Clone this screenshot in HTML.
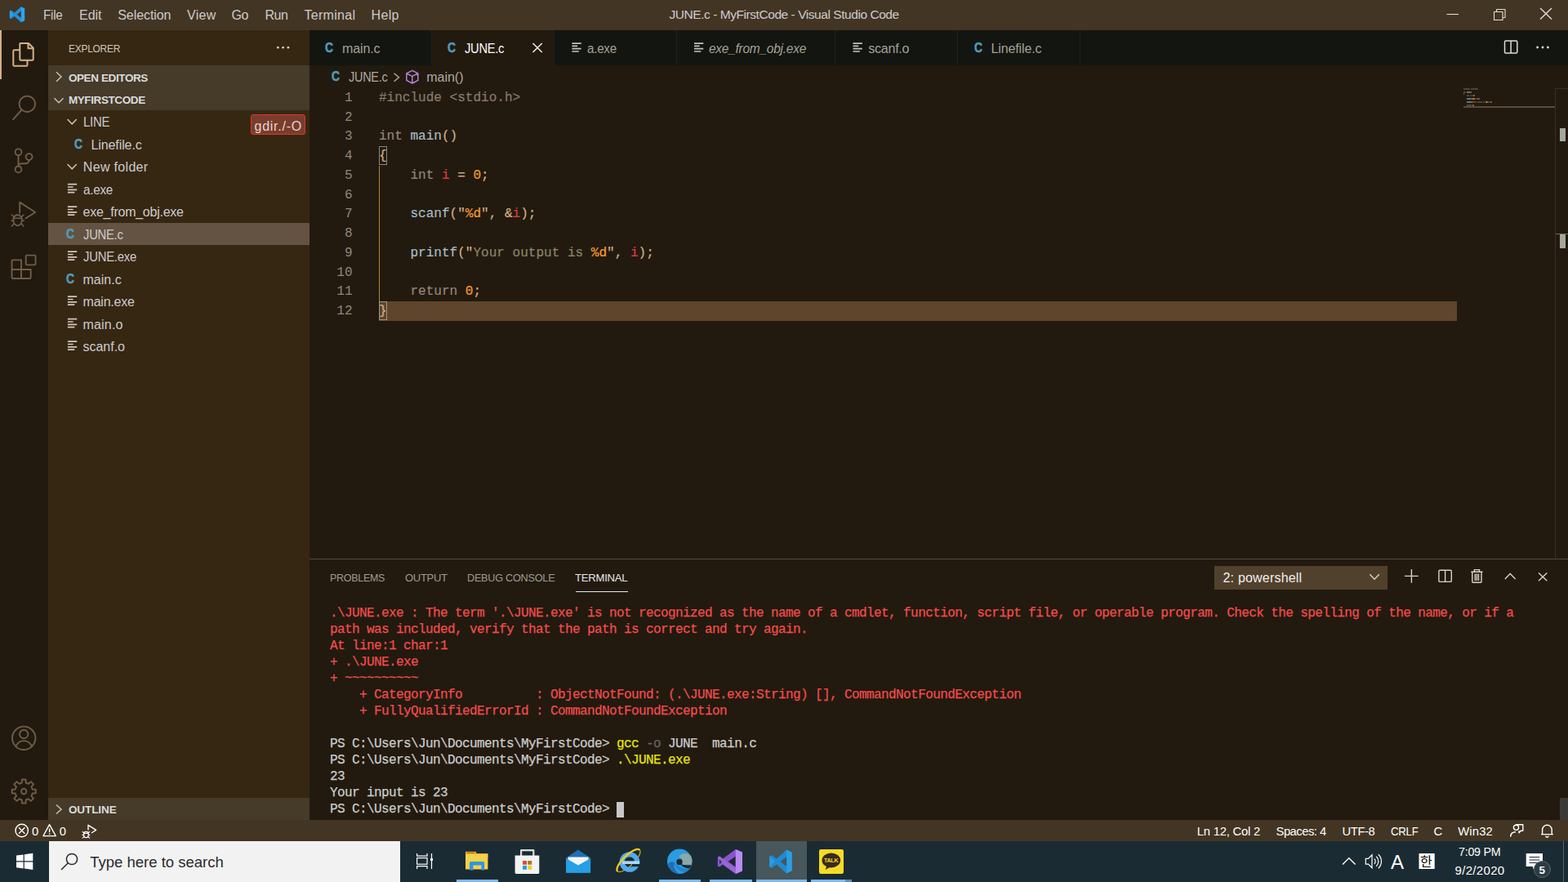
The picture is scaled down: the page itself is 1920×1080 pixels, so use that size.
<!DOCTYPE html>
<html lang="en"><head><meta charset="utf-8">
<title>JUNE.c - MyFirstCode - Visual Studio Code</title>
<style>
html,body{margin:0;padding:0;width:1920px;height:1080px;overflow:hidden;background:#221a0f}
body{position:relative;font-family:"Liberation Sans",sans-serif;color:#cccccc}
.a{position:absolute}
.t{position:absolute;white-space:pre;line-height:1;font-family:"Liberation Sans",sans-serif}
.m{font-family:"Liberation Mono",monospace}
.k{font-family:"Liberation Sans","Noto Sans CJK KR",sans-serif}
svg{position:absolute;overflow:visible}
/* regions */
#titlebar{left:0;top:0;width:1920px;height:37px;background:#423523}
#activity{left:0;top:37px;width:59px;height:967px;background:#221a0f}
#sidebar{left:59px;top:37px;width:320px;height:967px;background:#362712}
#tabs{left:379px;top:37px;width:1541px;height:43px;background:#131510}
#editor{left:379px;top:80px;width:1541px;height:605px;background:#221a0f}
#panel{left:379px;top:685px;width:1541px;height:319px;background:#221a0f}
#statusbar{left:0;top:1003.5px;width:1920px;height:26.5px;background:#423523}
#taskbar{left:0;top:1030px;width:1920px;height:50px;background:#1b2b33}
.sec{position:absolute;left:0;width:320px;background:#463a29}
.row{position:absolute;left:0;width:320px;height:27px}
/* code */
.cl{position:absolute;left:464px;white-space:pre;font-family:"Liberation Mono",monospace;font-size:16.042px;line-height:23.75px;height:23.75px;color:#d3af86;-webkit-text-stroke:0.2px}
.ln{position:absolute;left:379px;width:52.6px;text-align:right;white-space:pre;font-family:"Liberation Mono",monospace;font-size:16.042px;line-height:23.75px;height:23.75px;color:#8e887e}
.kw{color:#94867a}.pp{color:#8a7b6b}.fn{color:#a9bcc2}.vr{color:#de3a42}.nu{color:#f79a32}.st{color:#8c8468}.pl{color:#d3af86}
/* terminal */
.tl{position:absolute;left:404px;white-space:pre;font-family:"Liberation Mono",monospace;font-size:16px;letter-spacing:-0.6px;line-height:20px;height:20px;color:#cccccc;-webkit-text-stroke:0.25px}
.r{color:#f14c4c}.y{color:#e5e510}.g{color:#666666}

</style></head>
<body>
<!-- ===== main regions ===== -->
<div class="a" id="titlebar"></div>
<div class="a" id="activity"><div class="a" style="left:0;top:0;width:2px;height:60px;background:#d3af86"></div></div>
<div class="a" id="sidebar">
  <div class="sec" style="top:43px;height:55px"></div>
  <div class="row" style="top:236.3px;height:26.6px;background:#645342"></div>
  <div class="sec" style="top:940px;height:27px"></div>
  <div class="a" style="left:248px;top:103.3px;width:67px;height:25px;background:#7a3c2c;border:1px solid #d8372f;border-radius:3px;box-sizing:border-box"></div>
</div>
<div class="a" id="tabs">
  <div class="a" style="left:149.5px;top:0;width:150px;height:43px;background:#221a0f"></div>
  <div class="a" style="left:149px;top:0;width:1px;height:43px;background:#1d211b"></div>
  <div class="a" style="left:299px;top:0;width:1px;height:43px;background:#1d211b"></div>
  <div class="a" style="left:449px;top:0;width:1px;height:43px;background:#1d211b"></div>
  <div class="a" style="left:643px;top:0;width:1px;height:43px;background:#1d211b"></div>
  <div class="a" style="left:793px;top:0;width:1px;height:43px;background:#1d211b"></div>
  <div class="a" style="left:943px;top:0;width:1px;height:43px;background:#1d211b"></div>
</div>
<div class="a" id="editor">
  <!-- current line highlight -->
  <div class="a" style="left:85px;top:288.75px;width:1320px;height:23.75px;background:#5e452b"></div>
  <!-- indent guide -->
  <div class="a" style="left:85px;top:122.5px;width:1px;height:166.5px;background:#b08538"></div>
  <!-- bracket match boxes -->
  <div class="a" style="left:85px;top:99.2px;width:9.5px;height:23.3px;border:1px solid #8a8578;box-sizing:border-box"></div>
  <div class="a" style="left:85px;top:288.9px;width:9.5px;height:23.3px;border:1px solid #9a948a;box-sizing:border-box"></div>
  <!-- minimap code -->
  <div class="a" style="left:1413px;top:28.1px;width:8px;height:1.6px;background:#8a7b6b;opacity:0.42"></div>
  <div class="a" style="left:1422px;top:28.1px;width:9px;height:1.6px;background:#8a7b6b;opacity:0.42"></div>
  <div class="a" style="left:1413px;top:32.1px;width:3px;height:1.6px;background:#94867a;opacity:0.42"></div>
  <div class="a" style="left:1417px;top:32.1px;width:4px;height:1.6px;background:#8ab1c8;opacity:0.6"></div>
  <div class="a" style="left:1421px;top:32.1px;width:2px;height:1.6px;background:#d3af86;opacity:0.42"></div>
  <div class="a" style="left:1413px;top:34.1px;width:1px;height:1.6px;background:#d3af86;opacity:0.42"></div>
  <div class="a" style="left:1417px;top:36.1px;width:3px;height:1.6px;background:#94867a;opacity:0.42"></div>
  <div class="a" style="left:1421px;top:36.1px;width:1px;height:1.6px;background:#de3a42;opacity:0.7"></div>
  <div class="a" style="left:1423px;top:36.1px;width:1px;height:1.6px;background:#d3af86;opacity:0.42"></div>
  <div class="a" style="left:1425px;top:36.1px;width:1px;height:1.6px;background:#f79a32;opacity:0.7"></div>
  <div class="a" style="left:1426px;top:36.1px;width:1px;height:1.6px;background:#d3af86;opacity:0.42"></div>
  <div class="a" style="left:1417px;top:40.1px;width:5px;height:1.6px;background:#8ab1c8;opacity:0.6"></div>
  <div class="a" style="left:1422px;top:40.1px;width:2px;height:1.6px;background:#d3af86;opacity:0.42"></div>
  <div class="a" style="left:1424px;top:40.1px;width:2px;height:1.6px;background:#f79a32;opacity:0.7"></div>
  <div class="a" style="left:1426px;top:40.1px;width:2px;height:1.6px;background:#d3af86;opacity:0.42"></div>
  <div class="a" style="left:1429px;top:40.1px;width:1px;height:1.6px;background:#d3af86;opacity:0.42"></div>
  <div class="a" style="left:1430px;top:40.1px;width:1px;height:1.6px;background:#de3a42;opacity:0.7"></div>
  <div class="a" style="left:1431px;top:40.1px;width:2px;height:1.6px;background:#d3af86;opacity:0.42"></div>
  <div class="a" style="left:1417px;top:44.1px;width:6px;height:1.6px;background:#8ab1c8;opacity:0.6"></div>
  <div class="a" style="left:1423px;top:44.1px;width:2px;height:1.6px;background:#d3af86;opacity:0.42"></div>
  <div class="a" style="left:1425px;top:44.1px;width:4px;height:1.6px;background:#8c8468;opacity:0.42"></div>
  <div class="a" style="left:1430px;top:44.1px;width:6px;height:1.6px;background:#8c8468;opacity:0.42"></div>
  <div class="a" style="left:1437px;top:44.1px;width:2px;height:1.6px;background:#8c8468;opacity:0.42"></div>
  <div class="a" style="left:1440px;top:44.1px;width:2px;height:1.6px;background:#f79a32;opacity:0.7"></div>
  <div class="a" style="left:1442px;top:44.1px;width:2px;height:1.6px;background:#d3af86;opacity:0.42"></div>
  <div class="a" style="left:1445px;top:44.1px;width:1px;height:1.6px;background:#de3a42;opacity:0.7"></div>
  <div class="a" style="left:1446px;top:44.1px;width:2px;height:1.6px;background:#d3af86;opacity:0.42"></div>
  <div class="a" style="left:1417px;top:48.1px;width:6px;height:1.6px;background:#94867a;opacity:0.42"></div>
  <div class="a" style="left:1424px;top:48.1px;width:1px;height:1.6px;background:#f79a32;opacity:0.7"></div>
  <div class="a" style="left:1425px;top:48.1px;width:1px;height:1.6px;background:#d3af86;opacity:0.42"></div>
  <div class="a" style="left:1413px;top:50.1px;width:1px;height:1.6px;background:#d3af86;opacity:0.7"></div>
  <!-- minimap highlight + overview ruler -->
  <div class="a" style="left:1413px;top:50.3px;width:112px;height:1.6px;background:#5a4a38"></div>
  <div class="a" style="left:1525px;top:28px;width:1px;height:577px;background:#3a3126"></div>
  <div class="a" style="left:1525px;top:28px;width:16px;height:1px;background:#3a3126"></div>
  <div class="a" style="left:1531px;top:77px;width:7px;height:16px;background:#a3a89e"></div>
  <div class="a" style="left:1526px;top:206px;width:15px;height:1px;background:#7a6a50"></div>
  <div class="a" style="left:1531px;top:207px;width:7px;height:17px;background:#a3a89e"></div>
</div>
<div class="a" id="panel">
  <div class="a" style="left:0;top:-1px;width:1541px;height:1px;background:#574835"></div>
  <div class="a" style="left:325.5px;top:39px;width:64.5px;height:1px;background:#e7e7e7"></div>
  <div class="a" style="left:1108px;top:7.5px;width:212px;height:29.3px;background:#51412c"></div>
  <div class="a" style="left:376px;top:296.7px;width:9px;height:19px;background:#c8c8c8"></div>
  <div class="a" style="left:1530.8px;top:291.5px;width:10.2px;height:27px;background:#3b3a36"></div>
</div>
<div class="a" id="statusbar"></div>
<div class="a" id="taskbar">
  <div class="a" style="left:60px;top:0;width:430px;height:50px;background:#f2f2f2"></div>
  <div class="a" style="left:926px;top:0;width:61.5px;height:50px;background:#47575b"></div>
  <div class="a" style="left:559px;top:47px;width:51px;height:3px;background:#7db9e8"></div>
  <div class="a" style="left:806.7px;top:47px;width:51.6px;height:3px;background:#7db9e8"></div>
  <div class="a" style="left:869px;top:47px;width:51.6px;height:3px;background:#7db9e8"></div>
  <div class="a" style="left:926px;top:47px;width:61.5px;height:3px;background:#7db9e8"></div>
  <div class="a" style="left:993.3px;top:47px;width:42px;height:3px;background:#7db9e8"></div>
  <div class="a" style="left:1035.3px;top:47px;width:8px;height:3px;background:#5a8db5"></div>
  <div class="a" style="left:1913.7px;top:0;width:1px;height:50px;background:#56646b"></div>
</div>
<!-- ===== editor code ===== -->
<div class="ln" style="top:108.90px">1</div>
<div class="cl" style="top:108.90px"><span class="pp">#include &lt;stdio.h&gt;</span></div>
<div class="ln" style="top:132.65px">2</div>
<div class="ln" style="top:156.40px">3</div>
<div class="cl" style="top:156.40px"><span class="kw">int</span> <span class="fn">main</span>()</div>
<div class="ln" style="top:180.15px">4</div>
<div class="cl" style="top:180.15px">{</div>
<div class="ln" style="top:203.90px">5</div>
<div class="cl" style="top:203.90px">    <span class="kw">int</span> <span class="vr">i</span> = <span class="nu">0</span>;</div>
<div class="ln" style="top:227.65px">6</div>
<div class="ln" style="top:251.40px">7</div>
<div class="cl" style="top:251.40px">    <span class="fn">scanf</span>(<span class="pl">"</span><span class="nu">%d</span><span class="pl">"</span>, &amp;<span class="vr">i</span>);</div>
<div class="ln" style="top:275.15px">8</div>
<div class="ln" style="top:298.90px">9</div>
<div class="cl" style="top:298.90px">    <span class="fn">printf</span>(<span class="pl">"</span><span class="st">Your output is </span><span class="nu">%d</span><span class="pl">"</span>, <span class="vr">i</span>);</div>
<div class="ln" style="top:322.65px">10</div>
<div class="ln" style="top:346.40px">11</div>
<div class="cl" style="top:346.40px">    <span class="kw">return</span> <span class="nu">0</span>;</div>
<div class="ln" style="top:370.15px">12</div>
<div class="cl" style="top:370.15px">}</div>
<!-- ===== terminal ===== -->
<div class="tl r" style="top:741.0px">.\JUNE.exe : The term '.\JUNE.exe' is not recognized as the name of a cmdlet, function, script file, or operable program. Check the spelling of the name, or if a</div>
<div class="tl r" style="top:761.0px">path was included, verify that the path is correct and try again.</div>
<div class="tl r" style="top:781.0px">At line:1 char:1</div>
<div class="tl r" style="top:801.0px">+ .\JUNE.exe</div>
<div class="tl r" style="top:821.0px">+ ~~~~~~~~~~</div>
<div class="tl r" style="top:841.0px">    + CategoryInfo          : ObjectNotFound: (.\JUNE.exe:String) [], CommandNotFoundException</div>
<div class="tl r" style="top:861.0px">    + FullyQualifiedErrorId : CommandNotFoundException</div>
<div class="tl " style="top:901.0px">PS C:\Users\Jun\Documents\MyFirstCode&gt; <span class="y">gcc</span> <span class="g">-o</span> JUNE  main.c</div>
<div class="tl " style="top:921.0px">PS C:\Users\Jun\Documents\MyFirstCode&gt; <span class="y">.\JUNE.exe</span></div>
<div class="tl " style="top:941.0px">23</div>
<div class="tl " style="top:961.0px">Your input is 23</div>
<div class="tl " style="top:981.0px">PS C:\Users\Jun\Documents\MyFirstCode&gt; </div>
<!-- ===== icons (single overlay svg, page coordinates) ===== -->
<svg width="1920" height="1080" viewBox="0 0 1920 1080" style="left:0;top:0" fill="none" stroke-linecap="round" stroke-linejoin="round">
<g transform="translate(11.00 7.75) scale(0.2000)" stroke="none">
<path fill="#2aa5ee" d="M74 2 L96 12.6 V87.4 L74 98 L33 60.6 L12.6 76 L4 71.6 V28.4 L12.6 24 L33 39.4 Z M74 29 L48 50 L74 71 Z" fill-rule="evenodd"/>
<path fill="#1a7fc4" d="M74 2 L33 39.4 L12.6 24 L4 28.4 L26 50 L4 71.6 L12.6 76 L33 60.6 L74 98 V71 L48 50 L74 29 Z" opacity="0.55"/>
</g>
<g stroke="#e0dcd4" stroke-width="1.1" stroke-linecap="butt">
<path d="M1771.5 17.5 H1786"/>
<path d="M1829.5 14.5 H1840 V24.5 H1829.5 Z M1832.5 14.5 V11.5 H1843 V21.5 H1840"/>
<path d="M1886 10 L1900 23.5 M1900 10 L1886 23.5" stroke-width="1.4"/>
</g>
<g stroke="#d3af86" stroke-width="2">
<path d="M24.5 53 H35 L40.7 58.7 V72.5 Q40.7 73.7 39.5 73.7 H25.5 Q24.3 73.7 24.3 72.5 V54.2 Q24.3 53 25.5 53 Z M34.5 53.5 V59.2 H40.2"/>
<path d="M24 61.3 H17.5 Q16.3 61.3 16.3 62.5 V79.6 Q16.3 80.8 17.5 80.8 H32.3 Q33.5 80.8 33.5 79.6 V74"/>
</g>
<g stroke="#6f5d49" stroke-width="1.9">
<circle cx="33.3" cy="127.3" r="9.7"/><path d="M26.5 134.5 L16 146.3"/>
<circle cx="22.5" cy="186.3" r="3.9"/><circle cx="35.6" cy="192" r="3.9"/><circle cx="22.5" cy="207.4" r="3.9"/>
<path d="M22.5 190.3 V203.4 M35.6 196 Q35.6 200.3 30 200.3 H27 Q22.5 200.3 22.5 203"/>
<path d="M24.2 260.5 V247.6 L43.3 260 L31.5 267.3"/>
<ellipse cx="21.6" cy="269.6" rx="5.3" ry="6.6"/>
<path d="M16.5 267.3 H26.7 M14.4 263 L16.8 265.5 M28.8 263 L26.4 265.5 M14 270.3 H16.2 M27 270.3 H29.2 M14.4 277 L16.8 274.3 M28.8 277 L26.4 274.3" stroke-width="1.6"/>
<path d="M15.7 318.4 H26 V330 H37.7 V339.8 Q37.7 341 36.5 341 H15.7 Q14.5 341 14.5 339.8 V319.6 Q14.5 318.4 15.7 318.4 Z M26 330 V341 M14.5 330 H26"/>
<rect x="31.7" y="312.6" width="11.8" height="11.8" rx="1.2"/>
<circle cx="29.2" cy="903.8" r="14.2"/><circle cx="29.2" cy="899" r="5.2"/><path d="M19.6 914.3 A10 10 0 0 1 38.8 914.3"/>
<path d="M26.7 958.5 L26.9 954.5 L31.5 954.5 L31.7 958.5 L34.8 959.8 L37.8 957.1 L41.1 960.4 L38.4 963.4 L39.7 966.5 L43.7 966.7 L43.7 971.3 L39.7 971.5 L38.4 974.6 L41.1 977.6 L37.8 980.9 L34.8 978.2 L31.7 979.5 L31.5 983.5 L26.9 983.5 L26.7 979.5 L23.6 978.2 L20.6 980.9 L17.3 977.6 L20.0 974.6 L18.7 971.5 L14.7 971.3 L14.7 966.7 L18.7 966.5 L20.0 963.4 L17.3 960.4 L20.6 957.1 L23.6 959.8 Z"/>
<circle cx="29.2" cy="969.0" r="3.2"/>
</g>
<g stroke="#c8c2b8" stroke-width="1.5" stroke-linecap="butt" stroke-linejoin="miter">
<path d="M69 88.3 L75 94 L69 99.7"/>
<path d="M66.5 120.3 L72 125.7 L77.5 120.3"/>
<path d="M82.6 146 L88.2 151.8 L93.8 146"/>
<path d="M82.6 201 L88.2 206.8 L93.8 201"/>
<path d="M69 985.5 L75 991 L69 996.5"/>
</g>
<g fill="#d0cabf" stroke="none"><circle cx="340.3" cy="58.2" r="1.4"/><circle cx="346.6" cy="58.2" r="1.4"/><circle cx="352.9" cy="58.2" r="1.4"/></g>
<g stroke="#cfc8be" stroke-width="1.7" stroke-linecap="butt"><path d="M82.9 225.7 h11.3 M82.9 229.0 h6.7 M82.9 232.3 h11.3 M82.9 235.6 h8.4"/></g>
<g stroke="#cfc8be" stroke-width="1.7" stroke-linecap="butt"><path d="M82.9 253.2 h11.3 M82.9 256.5 h6.7 M82.9 259.8 h11.3 M82.9 263.1 h8.4"/></g>
<g stroke="#cfc8be" stroke-width="1.7" stroke-linecap="butt"><path d="M82.9 308.2 h11.3 M82.9 311.5 h6.7 M82.9 314.8 h11.3 M82.9 318.1 h8.4"/></g>
<g stroke="#cfc8be" stroke-width="1.7" stroke-linecap="butt"><path d="M82.9 363.2 h11.3 M82.9 366.5 h6.7 M82.9 369.8 h11.3 M82.9 373.1 h8.4"/></g>
<g stroke="#cfc8be" stroke-width="1.7" stroke-linecap="butt"><path d="M82.9 390.7 h11.3 M82.9 394.0 h6.7 M82.9 397.3 h11.3 M82.9 400.6 h8.4"/></g>
<g stroke="#cfc8be" stroke-width="1.7" stroke-linecap="butt"><path d="M82.9 418.2 h11.3 M82.9 421.5 h6.7 M82.9 424.8 h11.3 M82.9 428.1 h8.4"/></g>
<g stroke="#c6c2ba" stroke-width="1.7" stroke-linecap="butt"><path d="M700.4 53.1 h11.3 M700.4 56.4 h6.7 M700.4 59.7 h11.3 M700.4 63.0 h8.4"/></g>
<g stroke="#c6c2ba" stroke-width="1.7" stroke-linecap="butt"><path d="M850.0 53.1 h11.3 M850.0 56.4 h6.7 M850.0 59.7 h11.3 M850.0 63.0 h8.4"/></g>
<g stroke="#c6c2ba" stroke-width="1.7" stroke-linecap="butt"><path d="M1044.5 53.1 h11.3 M1044.5 56.4 h6.7 M1044.5 59.7 h11.3 M1044.5 63.0 h8.4"/></g>
<path d="M652.5 53 L663.7 64 M663.7 53 L652.5 64" stroke="#f0f0f0" stroke-width="1.5" stroke-linecap="butt"/>
<g stroke="#e0dcd4" stroke-width="1.5" stroke-linecap="butt"><rect x="1842.5" y="50" width="15.3" height="15" rx="1.2"/><path d="M1850.1 50 V65"/></g>
<g fill="#e0dcd4" stroke="none"><circle cx="1882.6" cy="58" r="1.4"/><circle cx="1889" cy="58" r="1.4"/><circle cx="1895.4" cy="58" r="1.4"/></g>
<path d="M482.5 89.7 L488.5 94.7 L482.5 99.7" stroke="#b0aaa0" stroke-width="1.4" stroke-linecap="butt" stroke-linejoin="miter"/>
<g stroke="#b180d7" stroke-width="1.5"><path d="M504.8 86.3 L511.8 89.8 V98.4 L504.8 102 L497.8 98.4 V89.8 Z M497.8 89.8 L504.8 93.4 L511.8 89.8 M504.8 93.4 V102"/></g>
<g stroke="#d8d4cc" stroke-width="1.4" stroke-linecap="butt" stroke-linejoin="miter">
<path d="M1677.3 703.3 L1683 709.3 L1688.7 703.3"/>
<path d="M1728.4 697 V713.7 M1720 705.4 H1736.8"/>
<rect x="1761.9" y="698.2" width="15.4" height="14.2" rx="1.2"/><path d="M1769.6 698.2 V712.4"/>
<path d="M1801.3 700.2 H1815.5 M1805.3 700 V697.6 H1811.5 V700 M1802.8 700.5 V712.2 Q1802.8 713.2 1803.8 713.2 H1813 Q1814 713.2 1814 712.2 V700.5 M1806.3 702.5 V711 M1808.4 702.5 V711 M1810.5 702.5 V711"/>
<path d="M1842.8 709 L1849.2 702.4 L1855.6 709"/>
<path d="M1884 701.5 L1894.3 711.3 M1894.3 701.5 L1884 711.3"/>
</g>
<g stroke="#ffffff" stroke-width="1.4" stroke-linecap="butt">
<circle cx="26.7" cy="1017" r="7.7"/><path d="M23 1013.3 L30.4 1020.7 M30.4 1013.3 L23 1020.7"/>
<path d="M60.6 1009.6 L68.3 1023.6 H52.9 Z M60.6 1014.5 V1019.3 M60.6 1020.6 V1022"/>
<path d="M108 1016.5 V1010.3 L117.6 1016.4 L112 1020"/><ellipse cx="105.4" cy="1022" rx="2.9" ry="3.6" stroke-width="1.3"/><path d="M100.8 1018.2 L103 1020 M110 1018.2 L107.8 1020 M100.5 1022.3 H102.5 M108.3 1022.3 H110.3 M100.8 1026.4 L103 1024.4 M110 1026.4 L107.8 1024.4 M103 1020.4 H107.8" stroke-width="1.2"/>
<circle cx="1856.5" cy="1013.3" r="3.1"/><path d="M1849.6 1024.6 Q1850 1018.8 1856 1018.8 M1856 1009.7 H1864.8 V1017.3 H1862.3 L1860 1019.8 V1017.3" stroke-linejoin="round"/>
<path d="M1887 1021.6 H1901.8 M1888.6 1021.3 V1016 A5.8 5.8 0 0 1 1900.2 1016 V1021.3 M1892.8 1023.6 A1.6 1.6 0 0 0 1896 1023.6" stroke-linejoin="round"/>
</g>
<g fill="#ffffff" stroke="none"><path d="M20 1047.6 L28.6 1046.4 V1054.3 H20 Z M29.8 1046.2 L40.3 1044.7 V1054.3 H29.8 Z M20 1055.5 H28.6 V1063.4 L20 1062.2 Z M29.8 1055.5 H40.3 V1065 L29.8 1063.6 Z"/></g>
<g stroke="#2a2a2a" stroke-width="1.5"><circle cx="88" cy="1052" r="6.6"/><path d="M83.3 1056.8 L75.5 1064.5"/></g>
<g stroke="#ffffff" stroke-width="1.2" stroke-linecap="butt" stroke-linejoin="miter"><rect x="510.6" y="1050.6" width="12.4" height="7.6"/><path d="M510.6 1045 V1048.2 H523 V1045 M510.6 1064 V1060.6 H523 V1064 M528.5 1045 V1064"/><rect x="527" y="1051" width="3" height="3" fill="#ffffff" stroke="none"/></g>
<g stroke="none"><path fill="#e3b031" d="M570 1042.7 H582.6 L583.6 1045 H597.4 V1050 H570 Z"/><rect fill="#f4d24a" x="570" y="1046" width="27.4" height="18.6" rx="0.6"/><path fill="#2e96e2" d="M575 1065.6 V1056.6 Q575 1055 576.6 1055 H591.5 Q593.1 1055 593.1 1056.6 V1065.6 H589.4 V1059.4 H579.4 V1065.6 Z"/><rect fill="#a8720f" x="571.6" y="1043.5" width="9.5" height="1.2"/></g>
<g stroke="none"><path fill="none" stroke="#dcdcdc" stroke-width="2.2" d="M638.1 1048 V1041.1 H653.3 V1048"/><path fill="#f3f3f3" d="M630.6 1047.5 H660.3 V1068.6 Q660.3 1070 658.9 1070 H632 Q630.6 1070 630.6 1068.6 Z"/><rect fill="#e8463a" x="640" y="1054" width="5" height="4.8"/><rect fill="#a87a18" x="646.2" y="1054" width="5" height="4.8"/><rect fill="#25a0e4" x="640" y="1060" width="5" height="4.8"/><rect fill="#f2cf24" x="646.2" y="1060" width="5" height="4.8"/></g>
<g stroke="none"><path fill="#1f70b4" d="M693.1 1050.5 L707.8 1040.6 L723.1 1050.5 V1068.8 H693.1 Z"/><path fill="#f4f6f8" d="M695.6 1049.4 H720.6 V1054 L708 1060.4 L695.6 1054 Z"/><path fill="#269fe6" d="M693.1 1051 L708 1059.6 L723.1 1051 V1068.8 H693.1 Z"/></g>
<g><g transform="rotate(-43.9 769.7 1053.8)"><ellipse cx="769.7" cy="1053.8" rx="18.8" ry="6.5" stroke="#d9a516" stroke-width="1.2"/></g><circle cx="770.9" cy="1055.5" r="9.3" stroke="#4fabee" stroke-width="6"/><rect x="762" y="1054.3" width="21.2" height="3.7" fill="#a9d7f7" stroke="none"/><rect x="774" y="1058" width="10" height="3.1" fill="#1b2b33" stroke="none"/><g transform="rotate(-43.9 769.7 1053.8)"><path d="M750.9 1053.8 A18.8 6.5 0 0 1 788.5 1053.8" stroke="#f6c91c" stroke-width="2.3" stroke-linecap="butt"/></g></g>
<g stroke="none"><circle cx="832.2" cy="1054.7" r="15.2" fill="#2b9be2"/><path d="M835.5 1045.5 Q841 1043.5 846 1048 A15.2 15.2 0 0 1 846.6 1059.3 H838 Q835.4 1059.3 835.6 1056.6 Q836 1051 831 1048.5 Z" fill="#8ba9a8"/><path d="M826 1056.3 Q823.5 1063.5 831 1069.8 A15.2 15.2 0 0 1 817.5 1059 Q820.8 1053.3 826 1056.3 Z" fill="#1f6fb5"/><path d="M826 1056.5 Q826.5 1065 838.5 1068.5 Q843.5 1066.5 845.8 1062.6 Q838 1066.5 831.5 1061 Q828 1058 826 1056.5 Z" fill="#2383cd"/><circle cx="832" cy="1055.4" r="3.7" fill="#1b2b33"/><path d="M833 1058 Q836 1059.6 846.4 1059.3 L845 1063 Q837 1064 833 1058 Z" fill="#1b2b33"/></g>
<g stroke="none"><path fill="#8a54cc" d="M900.8 1040 L909 1043.6 V1066.4 L900.8 1070 L885 1058.6 L881.3 1061.6 L878.8 1060.4 V1049.6 L881.3 1048.4 L885 1051.4 Z M900.8 1048.6 L891.6 1055 L900.8 1061.4 Z M881.2 1052 V1058 L884.4 1055 Z" fill-rule="evenodd"/><path fill="#b98af2" d="M900.8 1040 L909 1043.6 V1066.4 L900.8 1070 Z"/><path fill="#a275e0" d="M881.3 1048.4 L885 1051.4 L900.8 1063 V1070 L885 1058.6 L878.8 1049.6 Z" opacity="0.55"/></g>
<g transform="translate(941.00 1040.00) scale(0.3000)" stroke="none">
<path fill="#2a9fe8" d="M74 2 L96 12.6 V87.4 L74 98 L33 60.6 L12.6 76 L4 71.6 V28.4 L12.6 24 L33 39.4 Z M74 29 L48 50 L74 71 Z" fill-rule="evenodd"/>
<path fill="#1a78c0" d="M74 2 L33 39.4 L12.6 24 L4 28.4 L26 50 L4 71.6 L12.6 76 L33 60.6 L74 98 V71 L48 50 L74 29 Z" opacity="0.55"/>
</g>
<g stroke="none"><rect x="1003" y="1040" width="30" height="30" rx="2.2" fill="#f5dc24"/><ellipse cx="1017.8" cy="1053.4" rx="11.3" ry="9" fill="#3a2a1e"/><path d="M1012.3 1060 L1010.7 1065 L1017 1061.5 Z" fill="#3a2a1e"/></g>
<path d="M1644 1058.6 L1651.8 1050.8 L1659.6 1058.6" stroke="#ffffff" stroke-width="1.4" stroke-linecap="butt" stroke-linejoin="miter"/>
<g stroke="#ffffff" stroke-width="1.2" stroke-linejoin="miter" stroke-linecap="butt"><path d="M1672.3 1051.3 H1675.5 L1680 1046.8 V1062.7 L1675.5 1058.2 H1672.3 Z"/><path d="M1682.8 1051.6 A4.2 4.2 0 0 1 1682.8 1057.9 M1685.2 1048.8 A8 8 0 0 1 1685.2 1060.7 M1687.8 1046.2 A11.8 11.8 0 0 1 1687.8 1063.3"/></g>
<rect x="1737.5" y="1045" width="19.2" height="19" fill="#ffffff" stroke="none"/>
<g stroke="none"><path fill="#ffffff" d="M1868.7 1045 H1889 V1061 H1880.5 L1877 1064 V1061 H1868.7 Z"/><path d="M1872.5 1049.5 H1885.3 M1872.5 1053 H1885.3 M1872.5 1056.5 H1885.3" stroke="#1b2b33" stroke-width="1.1" stroke-linecap="butt"/><circle cx="1888.4" cy="1064.5" r="10" fill="#2b3b42" stroke="#5b6a70" stroke-width="1"/></g>
</svg>

<!-- fitted text labels -->
<span class="t" style="left:53.27px;top:10.91px;font-size:16px;letter-spacing:-0.264px;color:#cccccc;transform:scaleX(0.9488);transform-origin:0 0;">File</span>
<span class="t" style="left:97.02px;top:10.91px;font-size:16px;letter-spacing:-0.039px;color:#cccccc;">Edit</span>
<span class="t" style="left:144.27px;top:10.91px;font-size:16px;letter-spacing:-0.077px;color:#cccccc;">Selection</span>
<span class="t" style="left:229.02px;top:10.91px;font-size:16px;letter-spacing:0.273px;color:#cccccc;">View</span>
<span class="t" style="left:283.52px;top:10.91px;font-size:16px;letter-spacing:-0.384px;color:#cccccc;">Go</span>
<span class="t" style="left:324.52px;top:10.91px;font-size:16px;letter-spacing:-0.450px;color:#cccccc;">Run</span>
<span class="t" style="left:372.52px;top:10.91px;font-size:16px;letter-spacing:0.284px;color:#cccccc;">Terminal</span>
<span class="t" style="left:454.52px;top:10.91px;font-size:16px;letter-spacing:0.351px;color:#cccccc;">Help</span>
<span class="t" style="left:819.53px;top:10.48px;font-size:15.5px;letter-spacing:-0.446px;color:#cccccc;">JUNE.c - MyFirstCode - Visual Studio Code</span>
<span class="t" style="left:83.89px;top:52.97px;font-size:13.5px;letter-spacing:-0.283px;color:#cfc8be;transform:scaleX(0.8849);transform-origin:0 0;">EXPLORER</span>
<span class="t" style="left:83.89px;top:88.87px;font-size:13.5px;letter-spacing:-0.388px;color:#dcdcdc;font-weight:bold">OPEN EDITORS</span>
<span class="t" style="left:83.89px;top:116.27px;font-size:13.5px;letter-spacing:-0.396px;color:#dcdcdc;font-weight:bold">MYFIRSTCODE</span>
<span class="t" style="left:83.89px;top:984.57px;font-size:13.5px;letter-spacing:-0.073px;color:#dcdcdc;font-weight:bold">OUTLINE</span>
<span class="t" style="left:101.82px;top:142.16px;font-size:16px;letter-spacing:-0.269px;color:#cccccc;transform:scaleX(0.9307);transform-origin:0 0;">LINE</span>
<span class="t" style="left:111.52px;top:169.66px;font-size:16px;letter-spacing:-0.100px;color:#cccccc;">Linefile.c</span>
<span class="t" style="left:101.82px;top:197.16px;font-size:16px;letter-spacing:0.320px;color:#cccccc;">New folder</span>
<span class="t" style="left:101.52px;top:224.66px;font-size:16px;letter-spacing:-0.263px;color:#cccccc;transform:scaleX(0.9520);transform-origin:0 0;">a.exe</span>
<span class="t" style="left:101.52px;top:252.16px;font-size:16px;letter-spacing:-0.249px;color:#cccccc;">exe_from_obj.exe</span>
<span class="t" style="left:101.82px;top:279.66px;font-size:16px;letter-spacing:-0.271px;color:#cccccc;transform:scaleX(0.9240);transform-origin:0 0;">JUNE.c</span>
<span class="t" style="left:101.82px;top:307.16px;font-size:16px;letter-spacing:-0.270px;color:#cccccc;transform:scaleX(0.9290);transform-origin:0 0;">JUNE.exe</span>
<span class="t" style="left:101.52px;top:334.66px;font-size:16px;letter-spacing:0.007px;color:#cccccc;">main.c</span>
<span class="t" style="left:101.52px;top:362.16px;font-size:16px;letter-spacing:-0.209px;color:#cccccc;">main.exe</span>
<span class="t" style="left:101.52px;top:389.66px;font-size:16px;letter-spacing:0.186px;color:#cccccc;">main.o</span>
<span class="t" style="left:101.52px;top:417.16px;font-size:16px;letter-spacing:-0.022px;color:#cccccc;">scanf.o</span>
<span class="t" style="left:311.52px;top:146.66px;font-size:16px;letter-spacing:0.742px;color:#e0d8d0;">gdir./-O</span>
<span class="t" style="left:419.02px;top:51.66px;font-size:16px;letter-spacing:-0.133px;color:#a5a198;">main.c</span>
<span class="t" style="left:569.02px;top:51.66px;font-size:16px;letter-spacing:-0.273px;color:#ffffff;transform:scaleX(0.9166);transform-origin:0 0;">JUNE.c</span>
<span class="t" style="left:719.02px;top:51.66px;font-size:16px;letter-spacing:-0.264px;color:#a5a198;transform:scaleX(0.9494);transform-origin:0 0;">a.exe</span>
<span class="t" style="left:868.32px;top:51.66px;font-size:16px;letter-spacing:-0.259px;color:#a5a198;transform:scaleX(0.9672);transform-origin:0 0;font-style:italic">exe_from_obj.exe</span>
<span class="t" style="left:1063.32px;top:51.66px;font-size:16px;letter-spacing:-0.239px;color:#a5a198;">scanf.o</span>
<span class="t" style="left:1213.52px;top:51.66px;font-size:16px;letter-spacing:-0.133px;color:#a5a198;">Linefile.c</span>
<span class="t" style="left:427.22px;top:86.76px;font-size:16px;letter-spacing:-0.277px;color:#b0aaa0;transform:scaleX(0.9037);transform-origin:0 0;">JUNE.c</span>
<span class="t" style="left:522.22px;top:86.76px;font-size:16px;letter-spacing:-0.017px;color:#b0aaa0;">main()</span>
<span class="t" style="left:404.10px;top:701.27px;font-size:13.5px;letter-spacing:-0.272px;color:#a09a8e;transform:scaleX(0.9205);transform-origin:0 0;">PROBLEMS</span>
<span class="t" style="left:496.10px;top:701.27px;font-size:13.5px;letter-spacing:-0.261px;color:#a09a8e;transform:scaleX(0.9597);transform-origin:0 0;">OUTPUT</span>
<span class="t" style="left:572.30px;top:701.27px;font-size:13.5px;letter-spacing:-0.267px;color:#a09a8e;transform:scaleX(0.9392);transform-origin:0 0;">DEBUG CONSOLE</span>
<span class="t" style="left:704.30px;top:701.27px;font-size:13.5px;letter-spacing:-0.257px;color:#e7e7e7;transform:scaleX(0.9721);transform-origin:0 0;">TERMINAL</span>
<span class="t" style="left:1497.52px;top:700.16px;font-size:16px;letter-spacing:0.198px;color:#f0f0f0;">2: powershell</span>
<span class="t" style="left:39.06px;top:1011.21px;font-size:14.75px;letter-spacing:0.000px;color:#ffffff;">0</span>
<span class="t" style="left:72.86px;top:1011.21px;font-size:14.75px;letter-spacing:0.000px;color:#ffffff;">0</span>
<span class="t" style="left:1465.86px;top:1011.21px;font-size:14.75px;letter-spacing:-0.206px;color:#ffffff;">Ln 12, Col 2</span>
<span class="t" style="left:1562.56px;top:1011.21px;font-size:14.75px;letter-spacing:-0.491px;color:#ffffff;">Spaces: 4</span>
<span class="t" style="left:1643.56px;top:1011.21px;font-size:14.75px;letter-spacing:-0.378px;color:#ffffff;">UTF-8</span>
<span class="t" style="left:1703.06px;top:1011.21px;font-size:14.75px;letter-spacing:-0.280px;color:#ffffff;transform:scaleX(0.8963);transform-origin:0 0;">CRLF</span>
<span class="t" style="left:1755.56px;top:1011.21px;font-size:14.75px;letter-spacing:0.000px;color:#ffffff;">C</span>
<span class="t" style="left:1785.16px;top:1011.21px;font-size:14.75px;letter-spacing:0.193px;color:#ffffff;">Win32</span>
<span class="t" style="left:110.24px;top:1046.74px;font-size:18.5px;letter-spacing:0.005px;color:#2a2a2a;">Type here to search</span>
<span class="t" style="left:1786.25px;top:1035.40px;font-size:15px;letter-spacing:-0.263px;color:#ffffff;transform:scaleX(0.9522);transform-origin:0 0;">7:09 PM</span>
<span class="t" style="left:1781.55px;top:1058.40px;font-size:15px;letter-spacing:0.316px;color:#ffffff;">9/2/2020</span>
<span class="t" style="left:1702.98px;top:1043.78px;font-size:24px;letter-spacing:0.000px;color:#ffffff;">A</span>
<span class="t" style="left:398.02px;top:51.46px;font-size:16px;letter-spacing:0.000px;color:#519aba;font-weight:bold;-webkit-text-stroke:0.55px #519aba;transform:scaleX(.86);transform-origin:0 0">C</span>
<span class="t" style="left:548.02px;top:51.46px;font-size:16px;letter-spacing:0.000px;color:#519aba;font-weight:bold;-webkit-text-stroke:0.55px #519aba;transform:scaleX(.86);transform-origin:0 0">C</span>
<span class="t" style="left:1192.72px;top:51.46px;font-size:16px;letter-spacing:0.000px;color:#519aba;font-weight:bold;-webkit-text-stroke:0.55px #519aba;transform:scaleX(.86);transform-origin:0 0">C</span>
<span class="t" style="left:405.82px;top:86.46px;font-size:16px;letter-spacing:0.000px;color:#519aba;font-weight:bold;-webkit-text-stroke:0.55px #519aba;transform:scaleX(.86);transform-origin:0 0">C</span>
<span class="t" style="left:90.72px;top:168.96px;font-size:16px;letter-spacing:0.000px;color:#519aba;font-weight:bold;-webkit-text-stroke:0.55px #519aba;transform:scaleX(.86);transform-origin:0 0">C</span>
<span class="t" style="left:80.72px;top:278.96px;font-size:16px;letter-spacing:0.000px;color:#519aba;font-weight:bold;-webkit-text-stroke:0.55px #519aba;transform:scaleX(.86);transform-origin:0 0">C</span>
<span class="t" style="left:80.72px;top:333.96px;font-size:16px;letter-spacing:0.000px;color:#519aba;font-weight:bold;-webkit-text-stroke:0.55px #519aba;transform:scaleX(.86);transform-origin:0 0">C</span>
<span class="t k" style="left:1739.02px;top:1047.96px;font-size:16px;letter-spacing:0.000px;color:#000000;">한</span>
<span class="t" style="left:1884.39px;top:1058.77px;font-size:13.5px;letter-spacing:0.000px;color:#ffffff;font-weight:bold">5</span>
<span class="t" style="left:1009.26px;top:1050.13px;font-size:8px;letter-spacing:-0.286px;color:#f5dc24;transform:scaleX(0.8794);transform-origin:0 0;font-weight:bold">TALK</span>
</body></html>
